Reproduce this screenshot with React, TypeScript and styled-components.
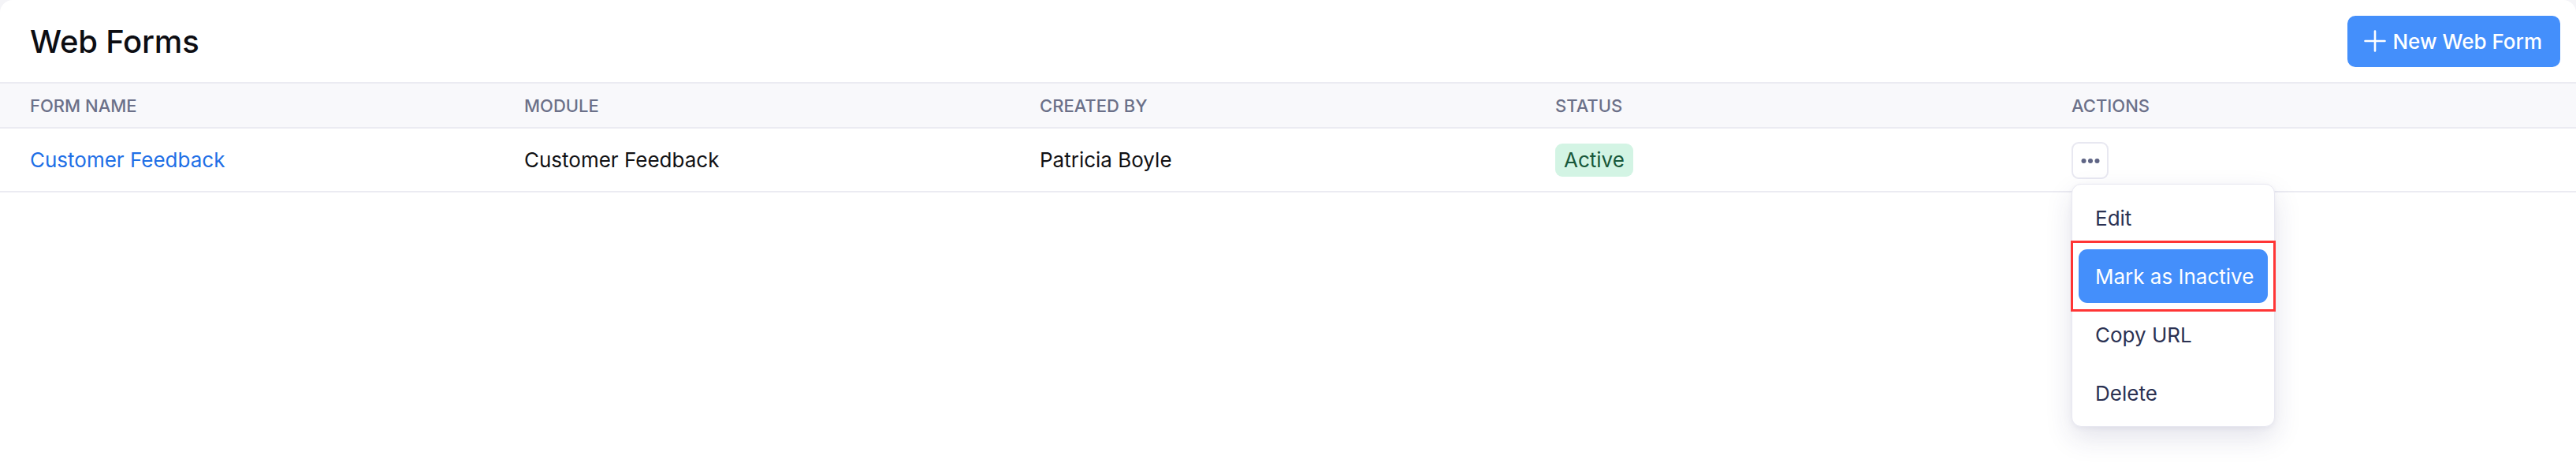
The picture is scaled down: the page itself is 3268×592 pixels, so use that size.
import React from 'react';
import styled, { createGlobalStyle } from 'styled-components';

const GlobalStyle = createGlobalStyle`
  html, body {
    margin: 0;
    padding: 0;
    background: #f4f4f7;
  }
  body {
    font-family: Inter, "Noto Sans", "Liberation Sans", sans-serif;
    -webkit-font-smoothing: antialiased;
  }
  * {
    box-sizing: border-box;
  }
`;

const Page = styled.div`
  min-height: 100vh;
  background: #ffffff;
  border-radius: 16px 16px 0 0;
`;

const PageHeader = styled.header`
  display: flex;
  align-items: center;
  justify-content: space-between;
  height: 104px;
  padding: 0 20px 0 38px;
`;

const Title = styled.h1`
  margin: 0;
  font-size: 40px;
  font-weight: 500;
  color: #0d0d12;
  letter-spacing: -0.2px;
`;

const PrimaryButton = styled.button`
  display: flex;
  align-items: center;
  gap: 8px;
  height: 65px;
  padding: 0 23px 0 21px;
  border: none;
  border-radius: 10px;
  background: #448ffb;
  color: #ffffff;
  font-family: inherit;
  font-size: 26px;
  font-weight: 500;
  cursor: pointer;
`;

const Grid = styled.div`
  display: grid;
  grid-template-columns: 627px 654px 654px 655px 1fr;
  align-items: center;
  padding-left: 38px;
`;

const HeadRow = styled(Grid)`
  height: 59px;
  background: #f8f8fb;
  border-top: 2px solid #ebebf2;
  border-bottom: 2px solid #ebebf2;
`;

const HeadCell = styled.div`
  font-size: 22px;
  font-weight: 500;
  color: #6b7089;
  text-transform: uppercase;
`;

const BodyRow = styled(Grid)`
  height: 81px;
  border-bottom: 2px solid #ebebf2;
`;

const Cell = styled.div<{ $link?: boolean }>`
  font-size: 26px;
  color: ${(p) => (p.$link ? '#1f6fe6' : '#111114')};
`;

const ActionsCell = styled.div`
  position: relative;
`;

const StatusBadge = styled.span`
  display: inline-flex;
  align-items: center;
  height: 42px;
  padding: 0 11px;
  border-radius: 9px;
  background: #d3f4e4;
  color: #18583a;
  font-size: 26px;
`;

const IconButton = styled.button`
  display: flex;
  align-items: center;
  justify-content: center;
  width: 47px;
  height: 47px;
  padding: 0;
  border: 2px solid #e8e8f1;
  border-radius: 9px;
  background: #ffffff;
  cursor: pointer;
  margin-top: 2px;
`;

const Menu = styled.div`
  position: absolute;
  top: 55px;
  left: 0;
  width: 258px;
  display: flex;
  flex-direction: column;
  gap: 6px;
  padding: 8px;
  background: #ffffff;
  border: 1px solid #e8e8f1;
  border-radius: 12px;
  box-shadow: 0 14px 34px rgba(40, 40, 100, 0.13), 0 2px 6px rgba(40, 40, 100, 0.05);
  z-index: 10;
`;

const MenuItem = styled.div<{ $active?: boolean }>`
  position: relative;
  display: flex;
  align-items: center;
  height: 68px;
  padding: 0 21px;
  border-radius: 11px;
  font-size: 26px;
  white-space: nowrap;
  color: ${(p) => (p.$active ? '#ffffff' : '#2b3152')};
  background: ${(p) => (p.$active ? '#448ffb' : 'transparent')};

  ${(p) =>
    p.$active &&
    `
    &::after {
      content: '';
      position: absolute;
      inset: -11px -10px;
      border: 3px solid #ff3535;
      pointer-events: none;
    }
  `}
`;

const PlusIcon = () => (
  <svg width="28" height="28" viewBox="0 0 28 28" fill="none">
    <path d="M14 1.5v25M1.5 14h25" stroke="#ffffff" strokeWidth="2.6" strokeLinecap="round" />
  </svg>
);

const DotsIcon = () => (
  <svg width="24" height="8" viewBox="0 0 24 8">
    <circle cx="3.5" cy="4" r="3" fill="#5f6585" />
    <circle cx="12" cy="4" r="3" fill="#5f6585" />
    <circle cx="20.5" cy="4" r="3" fill="#5f6585" />
  </svg>
);

const columns = ['Form Name', 'Module', 'Created By', 'Status', 'Actions'];
const menuItems = ['Edit', 'Mark as Inactive', 'Copy URL', 'Delete'];

export default function App() {
  return (
    <>
      <GlobalStyle />
      <Page>
        <PageHeader>
          <Title>Web Forms</Title>
          <PrimaryButton>
            <PlusIcon />
            New Web Form
          </PrimaryButton>
        </PageHeader>

        <HeadRow>
          {columns.map((c) => (
            <HeadCell key={c}>{c}</HeadCell>
          ))}
        </HeadRow>

        <BodyRow>
          <Cell $link>Customer Feedback</Cell>
          <Cell>Customer Feedback</Cell>
          <Cell>Patricia Boyle</Cell>
          <Cell>
            <StatusBadge>Active</StatusBadge>
          </Cell>
          <ActionsCell>
            <IconButton aria-label="More actions">
              <DotsIcon />
            </IconButton>
            <Menu>
              {menuItems.map((item) => (
                <MenuItem key={item} $active={item === 'Mark as Inactive'}>
                  {item}
                </MenuItem>
              ))}
            </Menu>
          </ActionsCell>
        </BodyRow>
      </Page>
    </>
  );
}
